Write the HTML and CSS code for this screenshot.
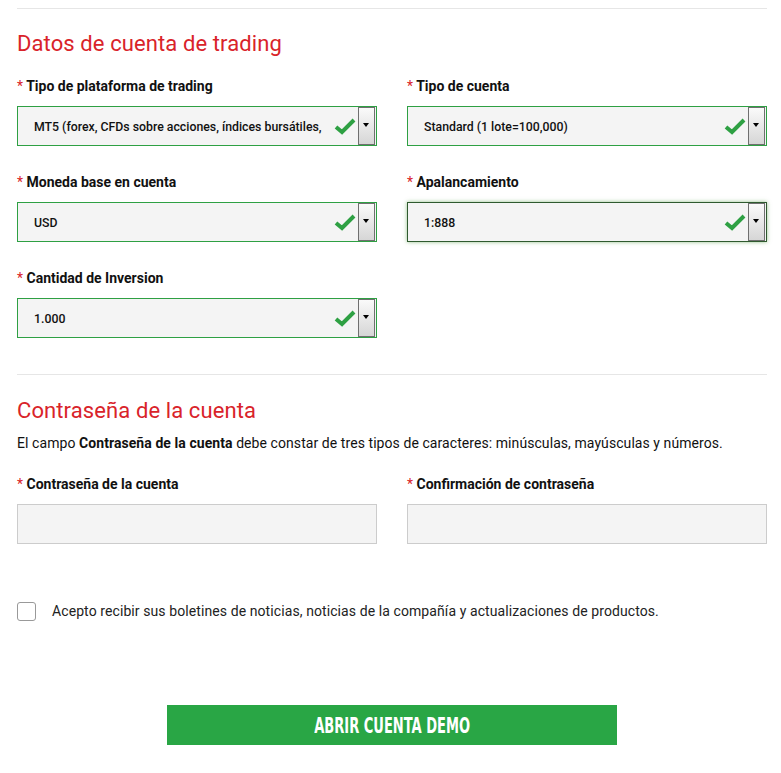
FILE: index.html
```html
<!DOCTYPE html>
<html lang="es">
<head>
    <meta charset="UTF-8">
    <meta name="viewport" content="width=device-width, initial-scale=1.0">
    <title>Cuenta demo</title>
    <link rel="stylesheet" href="styles.css">
</head>
<body>
    <div class="wrap">
        <hr class="line">
        <h2 class="title">Datos de cuenta de trading</h2>
        <div class="grid">
            <div class="field">
                <label><span class="req">*</span> Tipo de plataforma de trading</label>
                <div class="select ok">
                    <span class="value">MT5 (forex, CFDs sobre acciones, índices bursátiles,</span>
                    <svg class="check" viewBox="0 0 22 18"><path d="M2 10 L8 15 L20 3"/></svg>
                    <span class="arrow"></span>
                </div>
            </div>
            <div class="field">
                <label><span class="req">*</span> Tipo de cuenta</label>
                <div class="select ok">
                    <span class="value">Standard (1 lote=100,000)</span>
                    <svg class="check" viewBox="0 0 22 18"><path d="M2 10 L8 15 L20 3"/></svg>
                    <span class="arrow"></span>
                </div>
            </div>
            <div class="field">
                <label><span class="req">*</span> Moneda base en cuenta</label>
                <div class="select ok">
                    <span class="value">USD</span>
                    <svg class="check" viewBox="0 0 22 18"><path d="M2 10 L8 15 L20 3"/></svg>
                    <span class="arrow"></span>
                </div>
            </div>
            <div class="field">
                <label><span class="req">*</span> Apalancamiento</label>
                <div class="select ok focus">
                    <span class="value">1:888</span>
                    <svg class="check" viewBox="0 0 22 18"><path d="M2 10 L8 15 L20 3"/></svg>
                    <span class="arrow"></span>
                </div>
            </div>
            <div class="field">
                <label><span class="req">*</span> Cantidad de Inversion</label>
                <div class="select ok">
                    <span class="value">1.000</span>
                    <svg class="check" viewBox="0 0 22 18"><path d="M2 10 L8 15 L20 3"/></svg>
                    <span class="arrow"></span>
                </div>
            </div>
        </div>

        <hr class="line line2">
        <h2 class="title title2">Contraseña de la cuenta</h2>
        <p class="desc">El campo <b>Contraseña de la cuenta</b> debe constar de tres tipos de caracteres: minúsculas, mayúsculas y números.</p>
        <div class="grid pass">
            <div class="field">
                <label><span class="req">*</span> Contraseña de la cuenta</label>
                <input type="password" class="input">
            </div>
            <div class="field">
                <label><span class="req">*</span> Confirmación de contraseña</label>
                <input type="password" class="input">
            </div>
        </div>

        <label class="agree">
            <span class="box"></span>
            Acepto recibir sus boletines de noticias, noticias de la compañía y actualizaciones de productos.
        </label>

        <div class="actions">
            <a href="javascript:;" class="btn"><span>ABRIR CUENTA DEMO</span></a>
        </div>
    </div>
</body>
</html>
```

FILE: styles.css
```css
* {
    margin: 0;
    padding: 0;
    box-sizing: border-box;
}
body {
    font-family: Roboto, "Liberation Sans", Arial, sans-serif;
    color: #111;
    background: #fff;
}
.wrap {
    width: 750px;
    margin-left: 17px;
    padding-top: 8px;
}
.line {
    border: 0;
    border-top: 1px solid #e6e6e6;
}
.line2 {
    margin-top: 36px;
}
.title {
    margin-top: 20px;
    font-size: 22px;
    letter-spacing: .1px;
    line-height: 30px;
    font-weight: 400;
    color: #d9232a;
}
.title2 {
    margin-top: 21px;
}
.grid {
    display: grid;
    grid-template-columns: 360px 360px;
    column-gap: 30px;
    row-gap: 26px;
    margin-top: 17px;
}
.field label {
    display: block;
    font-size: 14px;
    line-height: 20px;
    font-weight: 700;
    margin-bottom: 10px;
}
.req {
    color: #d9232a;
    font-weight: 400;
}
.select {
    display: flex;
    align-items: center;
    height: 40px;
    padding-left: 16px;
    background: #f4f4f4;
    border: 1px solid #ccc;
}
.select.ok {
    border-color: #2ea043;
}
.select.focus {
    border-color: #2f5a2f;
    box-shadow: 0 0 4px rgba(60, 140, 40, .55);
}
.value {
    flex: 1;
    padding-top: 1px;
    font-size: 12.3px;
    font-weight: 500;
    white-space: nowrap;
    overflow: hidden;
}
.check {
    width: 22px;
    height: 18px;
    margin: 0 2px 0 8px;
}
.check path {
    fill: none;
    stroke: #2ea043;
    stroke-width: 4;
}
.arrow {
    position: relative;
    align-self: stretch;
    width: 17px;
    margin: 0 1px 0 0;
    border: 1px solid #6f6f6f;
    background: linear-gradient(#fafafa, #d6d6d6);
}
.arrow::after {
    content: "";
    position: absolute;
    left: 4px;
    top: 15px;
    border-left: 3.5px solid transparent;
    border-right: 3.5px solid transparent;
    border-top: 4px solid #000;
}
.desc {
    margin-top: 7px;
    font-size: 14px;
    letter-spacing: .07px;
    line-height: 20px;
}
.pass {
    margin-top: 21px;
}
.input {
    display: block;
    width: 100%;
    height: 40px;
    background: #f4f4f4;
    border: 1px solid #ccc;
    outline: none;
}
.agree {
    display: flex;
    align-items: center;
    gap: 16px;
    margin-top: 57px;
    font-size: 14px;
    letter-spacing: .09px;
    line-height: 20px;
    color: #222;
}
.box {
    width: 19px;
    height: 19px;
    border: 1px solid #999;
    border-radius: 3px;
    background: #fff;
}
.actions {
    display: flex;
    justify-content: center;
    margin-top: 84px;
}
.btn {
    display: flex;
    align-items: center;
    justify-content: center;
    width: 450px;
    height: 40px;
    background: #29a645;
    color: #fff;
    text-decoration: none;
}
.btn span {
    font-family: "DejaVu Sans Condensed", "DejaVu Sans", sans-serif;
    font-weight: 700;
    font-size: 22px;
    display: inline-block;
    transform: scaleX(.66);
}
```
